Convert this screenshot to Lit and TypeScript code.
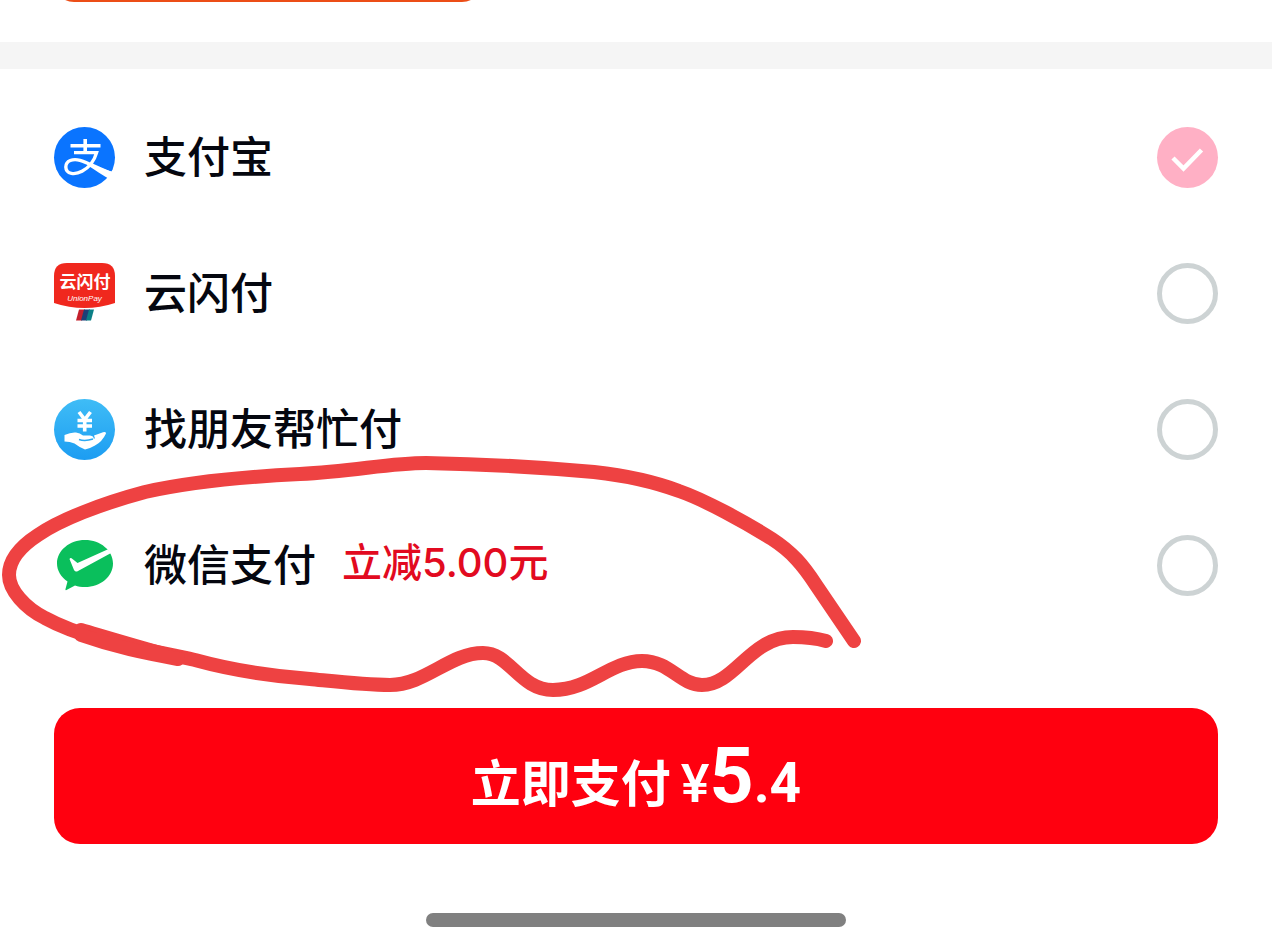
import { LitElement, html, css, svg, TemplateResult } from "lit";
import { customElement, state } from "lit/decorators.js";

interface Method {
  id: string;
  name: string;
  promo?: [string, string, string];
  icon: TemplateResult;
}

const alipay = svg`
  <circle cx="30.5" cy="30.5" r="30.5" fill="#0a74ff"/>
  <g fill="none" stroke="#fff" stroke-width="3.6">
    <path d="M16.5 18.8H46.5M31.2 12V26"/>
    <path d="M20 25.6H42.6C40.5 33 35 40.5 28 44.3C21 48 12 47.500 11.800 40C11.800 33.500 19 31.400 26 33.300C34 35.500 44 41.500 59 47" stroke-width="3.4"/>
  </g>
  <path d="M33 35.500C42 39.500 51 42.500 60.500 45.500C59.800 48.500 58.500 51 57 53C49 48.500 41 43 33 38Z" fill="#fff"/>`;

const unionPay = svg`
  <path d="M0 13Q0 0 13 0H48Q61 0 61 13V40Q46 45 30.500 45Q15 45 0 40Z" fill="#f0281e"/>
  <text x="31" y="25" text-anchor="middle" font-size="17" font-weight="700" fill="#fff"
    font-family="'Noto Sans CJK SC', sans-serif">云闪付</text>
  <text x="30.500" y="38" text-anchor="middle" font-size="8" font-style="italic" fill="#fff"
    font-family="'Liberation Sans', sans-serif">UnionPay</text>
  <path d="M25 46.500H31L28 57.500H22Z" fill="#c4202c"/>
  <path d="M30 46.500H36L33 57.500H27Z" fill="#1d3f77"/>
  <path d="M35 46.500H40L37 57.500H32Z" fill="#0b7f86"/>`;

const friend = svg`
  <defs><linearGradient id="sky" x1="0" y1="0" x2="0" y2="1">
    <stop offset="0" stop-color="#3fbcf6"/><stop offset="1" stop-color="#1c9df2"/>
  </linearGradient></defs>
  <circle cx="30.5" cy="30.5" r="30.5" fill="url(#sky)"/>
  <path d="M25 13L30.700 20.500L36.500 13M23.500 21.500H38M23.500 27H38M30.700 20.500V32.500" fill="none" stroke="#fff" stroke-width="3.600"/>
  <path d="M10.500 36Q17 33 22 33.500Q26 34 29 36.500H36Q40 37 39.500 39.500H41L40 36.500L47 34Q52 32 52 34.500Q48 43 41 46.500Q37 49 31 50.500Q25 48 20.500 44.500Q16 42.500 10.500 42.500Z" fill="#fff"/>
  <path d="M25 40.500Q31 42.500 39 40" fill="none" stroke="#2aa9f4" stroke-width="1.500"/>`;

const wechat = svg`
  <path d="M31 5C46.500 5 59 15.500 59 28.500C59 41.500 46.500 52 31 52C27.500 52 24 51.500 21 50.500L12.500 55Q11 55.500 11.500 54L13.500 46.500C7 42 3 35.500 3 28.500C3 15.500 15.500 5 31 5Z" fill="#0abf5c"/>
  <path d="M15.500 24Q16.500 22 18.500 24L23.500 28L53.500 14.500L58 17.500L24 36Q21.500 37.500 20 35Z" fill="#fff"/>`;

const METHODS: Method[] = [
  { id: "alipay", name: "支付宝", icon: alipay },
  { id: "unionpay", name: "云闪付", icon: unionPay },
  { id: "friend", name: "找朋友帮忙付", icon: friend },
  { id: "wechat", name: "微信支付", promo: ["立减", "5.00", "元"], icon: wechat },
];

@customElement("app-root")
export class AppRoot extends LitElement {
  static styles = css`
    :host {
      display: block;
      background: #fff;
      color: #05070f;
      font-family: "Noto Sans CJK SC", sans-serif;
    }
    .top {
      display: flex;
      align-items: flex-end;
      height: 2px;
      padding: 0 54px;
      margin-bottom: 40px;
      overflow: hidden;
    }
    .card {
      box-sizing: border-box;
      flex: 0 0 428px;
      height: 60px;
      border: 3px solid #ec4e17;
      border-radius: 20px;
    }
    .band {
      height: 27px;
      background: #f5f5f5;
    }
    .methods {
      position: relative;
      margin: 0;
      border: 0;
      padding: 20px 54px 0;
    }
    .row {
      display: flex;
      align-items: center;
      height: 136px;
    }
    .icon {
      flex: none;
      width: 61px;
      height: 61px;
      margin-right: 29px;
      overflow: visible;
    }
    .name {
      padding-bottom: 6px;
      font-size: 43px;
      line-height: 64px;
      font-weight: 500;
    }
    .promo {
      padding-bottom: 8px;
      margin-left: 26px;
      font-size: 40px;
      line-height: 60px;
      font-weight: 500;
      color: #e20a20;
    }
    .num {
      font-family: Inter, sans-serif;
    }
    .choice {
      display: grid;
      margin-left: auto;
    }
    .radio {
      grid-area: 1 / 1;
      appearance: none;
      box-sizing: border-box;
      width: 61px;
      height: 61px;
      margin: 0;
      border: 5px solid #cdd3d4;
      border-radius: 50%;
    }
    .radio:checked {
      border: 0;
      background: #ffb0c5;
    }
    .tick {
      grid-area: 1 / 1;
      width: 61px;
      height: 61px;
      pointer-events: none;
    }
    .mark {
      position: absolute;
      top: 0;
      left: 0;
      width: 900px;
      height: 640px;
      pointer-events: none;
    }
    .footer {
      display: flex;
      flex-direction: column;
      align-items: center;
      padding: 75px 54px 25px;
    }
    .pay {
      display: flex;
      justify-content: center;
      align-items: baseline;
      width: 100%;
      height: 136px;
      border: 0;
      border-radius: 26px;
      padding: 32px 0 0;
      background: #ff000f;
      color: #fff;
      font: 700 50px/72px "Noto Sans CJK SC", sans-serif;
    }
    .price {
      margin-left: 10px;
      font-family: Roboto, sans-serif;
      font-size: 55px;
    }
    .yen {
      font-weight: 500;
      font-size: 54px;
    }
    .whole {
      font-size: 77px;
    }
    .home {
      width: 420px;
      max-width: 100%;
      height: 14px;
      margin-top: 69px;
      border-radius: 7px;
      background: #808080;
    }
  `;

  @state() private selected = "alipay";

  private row(m: Method) {
    const checked = this.selected === m.id;
    return html`
      <label class="row">
        <svg class="icon" viewBox="0 0 61 61" aria-hidden="true">${m.icon}</svg>
        <span class="name">${m.name}</span>
        ${m.promo
          ? html`<span class="promo">${m.promo[0]}<span class="num">${m.promo[1]}</span>${m.promo[2]}</span>`
          : null}
        <span class="choice">
          <input class="radio" type="radio" name="method" value=${m.id} .checked=${checked}
            @change=${() => (this.selected = m.id)} />
          ${checked
            ? html`<svg class="tick" viewBox="0 0 61 61" aria-hidden="true">
                <path d="M16 31L26.500 41.500L44.500 23" fill="none" stroke="#fff" stroke-width="4.500" />
              </svg>`
            : null}
        </span>
      </label>`;
  }

  render() {
    return html`
      <div class="top"><div class="card"></div></div>
      <div class="band"></div>
      <fieldset class="methods">
        ${METHODS.map((m) => this.row(m))}
        <svg class="mark" viewBox="0 69 900 640" aria-hidden="true">
          <g fill="none" stroke="#ee4242" stroke-width="14" stroke-linecap="round" stroke-linejoin="round">
            <path d="M854 641L816 585C803 565 792 552 772 539C745 522 705 500 679 491C655 482 630 476 594 472C550 468 480 464 426 463C390 463 355 471 300 474C240 477 185 483 145 492C100 504 60 520 38 535C18 548 9 562 9 575C9 590 25 608 45 618C85 640 140 648 195 660C235 671 270 676 310 679C340 682 365 685 390 685C425 685 450 653 483 653C510 653 520 690 553 690C590 690 610 661 642 661C670 661 680 685 702 685C735 685 750 637 793 637Q812 637 826 641"/>
            <path d="M81 630C115 640 145 649 178 658"/>
            <path d="M81 635C115 647 145 653 178 659"/>
          </g>
        </svg>
      </fieldset>
      <div class="footer">
        <button class="pay" type="button">
          <span>立即支付</span>
          <span class="price"><span class="yen">¥</span><span class="whole">5</span>.4</span>
        </button>
        <div class="home"></div>
      </div>
    `;
  }
}
